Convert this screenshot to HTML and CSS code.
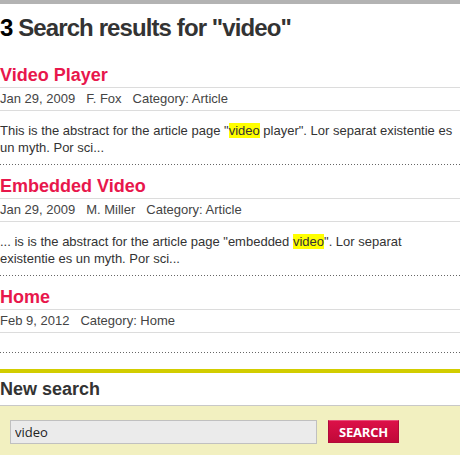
FILE: index.html
```html
<!DOCTYPE html>
<html>
<head>
<meta charset="utf-8">
<link rel="stylesheet" href="styles.css">
</head>
<body>
<div class="topbar"></div>
<h1 class="page-title"><span class="count">3</span> Search results for "video"</h1>
<div class="results">
  <div class="result">
    <h2 class="result-title">Video Player</h2>
    <div class="meta"><span>Jan 29, 2009</span><span>F. Fox</span><span>Category: Article</span></div>
    <p class="abstract">This is the abstract for the article page "<mark>video</mark> player". Lor separat existentie es un myth. Por sci...</p>
  </div>
  <div class="result">
    <h2 class="result-title">Embedded Video</h2>
    <div class="meta"><span>Jan 29, 2009</span><span>M. Miller</span><span>Category: Article</span></div>
    <p class="abstract">... is is the abstract for the article page "embedded <mark>video</mark>". Lor separat existentie es un myth. Por sci...</p>
  </div>
  <div class="result">
    <h2 class="result-title">Home</h2>
    <div class="meta"><span>Feb 9, 2012</span><span>Category: Home</span></div>
    <p class="abstract empty"></p>
  </div>
</div>
<div class="new-search">
  <h3 class="new-search-title">New search</h3>
  <form class="search-form">
    <input class="search-input" type="text" value="video">
    <button class="search-button" type="button">SEARCH</button>
  </form>
</div>
</body>
</html>
```
FILE: styles.css
```css
html, body {
  margin: 0;
  padding: 0;
  background: #fff;
}
body {
  font-family: "Liberation Sans", Arial, sans-serif;
  color: #333;
  width: 460px;
  overflow: hidden;
}
.topbar {
  height: 4px;
  background: #b3b3b3;
}
.page-title {
  margin: 10px 0 22px;
  font-size: 24px;
  line-height: 28px;
  font-weight: bold;
  letter-spacing: -0.9px;
  color: #333;
}
.count {
  color: #000;
}
.result-title {
  margin: 0;
  padding-bottom: 1px;
  font-size: 18px;
  line-height: 22px;
  font-weight: bold;
  color: #e8174c;
  border-bottom: 1px solid #dcdcdc;
}
.meta {
  font-size: 13px;
  line-height: 22px;
  color: #444;
  border-bottom: 1px solid #dcdcdc;
  display: flex;
}
.meta span {
  margin-right: 11px;
}
.abstract {
  margin: 0 0 10px;
  padding: 11px 0 9px;
  font-size: 13px;
  line-height: 17px;
  color: #333;
  background-image: linear-gradient(to right, #666 1px, transparent 1px);
  background-size: 3px 1px;
  background-repeat: repeat-x;
  background-position: 0 100%;
}
.abstract.empty {
  height: 0;
  padding: 20px 0 0;
  margin-bottom: 16px;
}
mark {
  background: #ffff00;
  color: #333;
}
.new-search {
  border-top: 4px solid #d2cd00;
}
.new-search-title {
  margin: 0;
  padding: 5px 0 5px;
  font-size: 18px;
  line-height: 22px;
  font-weight: bold;
  color: #333;
  border-bottom: 1px solid #c8c8c8;
}
.search-form {
  background: #f2f0c0;
  margin: 0;
  padding: 14px 10px 14px;
  display: flex;
  align-items: flex-start;
  height: 24px;
}
.search-input {
  box-sizing: border-box;
  width: 307px;
  height: 24px;
  margin: 0;
  padding: 0 4px;
  border: 1px solid #c0c0c0;
  background: #ebebeb;
  font-family: "Open Sans", "DejaVu Sans", sans-serif;
  font-size: 13px;
  color: #222;
  outline: none;
}
.search-button {
  margin: 0 0 0 11px;
  box-sizing: border-box;
  width: 71px;
  height: 23px;
  padding: 0;
  border: 1px solid #b00a3a;
  border-top-color: #e8507a;
  background: linear-gradient(#dc1048, #c00838);
  color: #fff;
  font-family: "Open Sans", "DejaVu Sans", sans-serif;
  font-weight: bold;
  font-size: 13px;
  letter-spacing: -0.2px;
  cursor: pointer;
}
```
